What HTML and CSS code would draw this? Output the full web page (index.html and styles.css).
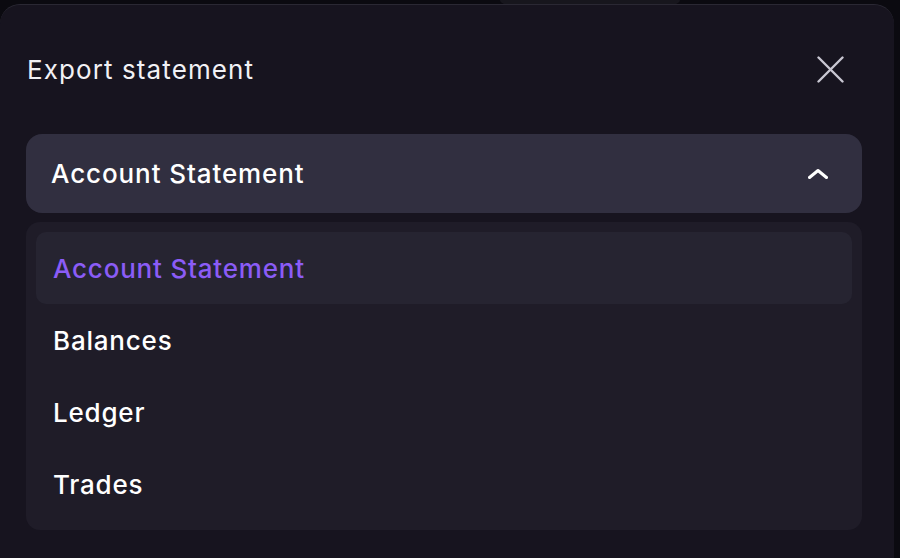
FILE: index.html
```html
<!DOCTYPE html>
<html lang="en">
<head>
<meta charset="utf-8">
<title>Export statement</title>
<link rel="stylesheet" href="styles.css">
</head>
<body>
<div class="backdrop-glow"></div>
<div class="modal">
  <div class="modal-header">
    <h2 class="modal-title">Export statement</h2>
    <button class="close-btn" aria-label="Close">
      <svg width="27" height="27" viewBox="0 0 27 27" fill="none" stroke="currentColor" stroke-width="2.4" stroke-linecap="round">
        <path d="M1.5 1.5 L25.5 25.5 M25.5 1.5 L1.5 25.5"/>
      </svg>
    </button>
  </div>
  <div class="select">
    <span class="select-value">Account Statement</span>
    <svg class="chevron" width="20" height="10" viewBox="0 0 20 10" fill="none" stroke="currentColor" stroke-width="3" stroke-linecap="round" stroke-linejoin="round">
      <path d="M1.5 8.5 L10 1.5 L18.5 8.5"/>
    </svg>
  </div>
  <ul class="menu">
    <li class="menu-item is-selected">Account Statement</li>
    <li class="menu-item">Balances</li>
    <li class="menu-item">Ledger</li>
    <li class="menu-item">Trades</li>
  </ul>
</div>
</body>
</html>
```
FILE: styles.css
```css
html, body {
  margin: 0;
  padding: 0;
  height: 100%;
  overflow: hidden;
}
body {
  background: #0b0a10;
  font-family: Inter, "Noto Sans", "Liberation Sans", sans-serif;
  color: #ffffff;
  position: relative;
}
.backdrop-glow {
  position: absolute;
  left: 500px;
  top: -14px;
  width: 180px;
  height: 28px;
  border-radius: 50%;
  background: #17161d;
}
.modal {
  position: relative;
  margin-top: 4px;
  width: 894px;
  height: 554px;
  box-sizing: border-box;
  padding: 0 32px 0 26px;
  background: #17141f;
  border-top: 1px solid #2a2833;
  border-radius: 20px 20px 0 0;
}
.modal-header {
  height: 129px;
  display: flex;
  align-items: center;
  justify-content: space-between;
}
.modal-title {
  margin: 0 0 0 1px;
  font-size: 26px;
  font-weight: 400;
  letter-spacing: 1.1px;
  color: #f2f1f5;
}
.close-btn {
  margin: 0 18px 0 0;
  padding: 0;
  border: 0;
  background: none;
  color: #c9c7d2;
  width: 27px;
  height: 27px;
  display: flex;
}
.select {
  height: 79px;
  box-sizing: border-box;
  padding: 0 34px 0 25px;
  background: #312f40;
  border-radius: 16px;
  display: flex;
  align-items: center;
  justify-content: space-between;
}
.select-value {
  font-size: 26px;
  font-weight: 500;
  letter-spacing: 0.9px;
  color: #ffffff;
}
.chevron {
  color: #ffffff;
}
.menu {
  list-style: none;
  margin: 9px 0 0 0;
  padding: 10px;
  background: #1f1c28;
  border-radius: 14px;
}
.menu-item {
  height: 72px;
  box-sizing: border-box;
  padding-left: 17px;
  display: flex;
  align-items: center;
  font-size: 26px;
  font-weight: 500;
  letter-spacing: 0.8px;
  color: #ffffff;
  border-radius: 10px;
}
.menu-item.is-selected {
  background: #262431;
  color: #8b5cf6;
}
```
